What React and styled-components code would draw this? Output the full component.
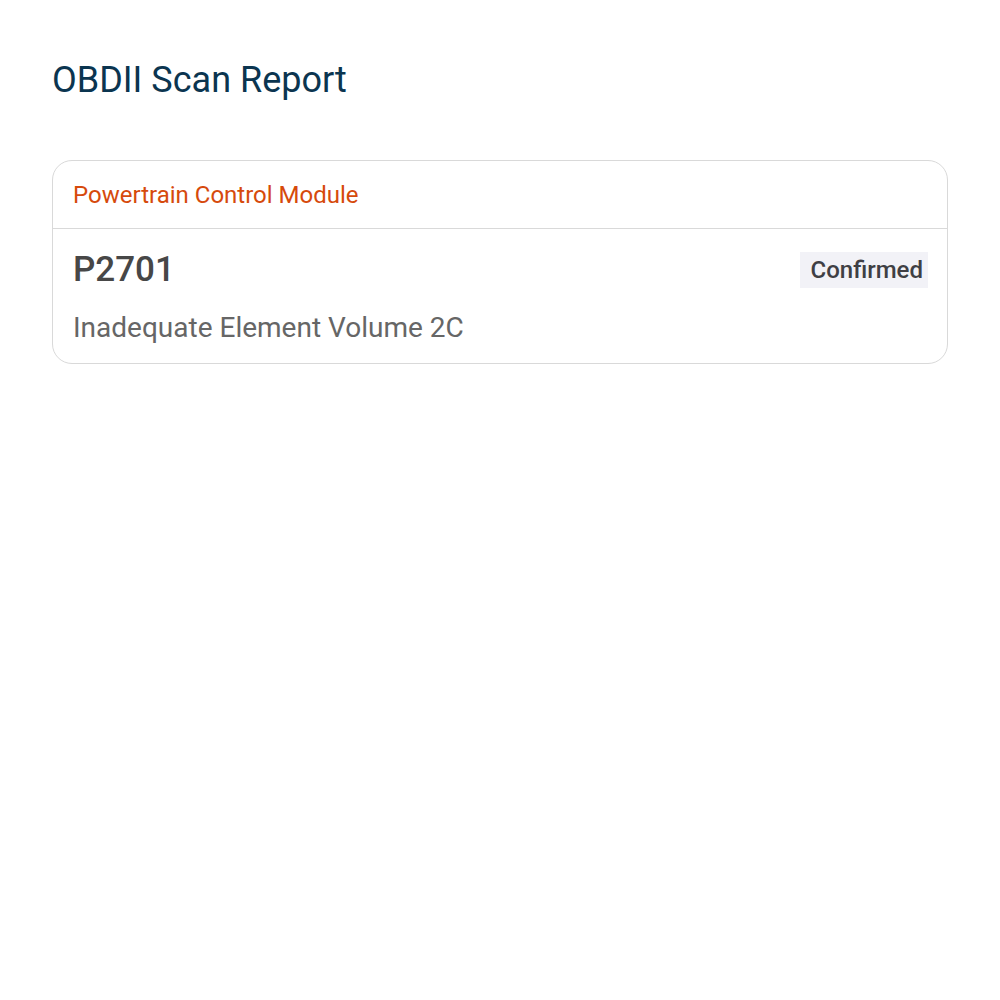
import React from "react";
import styled, { createGlobalStyle } from "styled-components";

const Global = createGlobalStyle`
  body { margin: 0; background: #ffffff; font-family: Roboto, "Liberation Sans", sans-serif; }
`;

const Page = styled.div`
  padding: 56px 52px;
  display: flex;
  flex-direction: column;
  gap: 56px;
`;

const Title = styled.h1`
  margin: 0;
  font-size: 36px;
  font-weight: 400;
  color: #0b3550;
  line-height: 48px;
`;

const Card = styled.div`
  border: 1px solid #d9d9d9;
  border-radius: 20px;
  overflow: hidden;
`;

const CardHeader = styled.div`
  padding: 0 20px;
  height: 67px;
  display: flex;
  align-items: center;
  border-bottom: 1px solid #d9d9d9;
  color: #d64a0c;
  font-size: 24px;
`;

const CardBody = styled.div`
  padding: 20px 19px 17px 20px;
  display: flex;
  flex-direction: column;
  gap: 19px;
`;

const Row = styled.div`
  display: flex;
  align-items: center;
  justify-content: space-between;
`;

const Code = styled.div`
  font-size: 35px;
  font-weight: 500;
  color: #474747;
  line-height: 42px;
`;

const Badge = styled.span`
  background: #f2f2f7;
  color: #3f3f44;
  font-size: 24px;
  font-weight: 500;
  padding: 0 5px 0 11px;
  line-height: 36px;
`;

const Description = styled.div`
  font-size: 28px;
  color: #666666;
  line-height: 36px;
`;

export default function App() {
  return (
    <>
      <Global />
      <Page>
        <Title>OBDII Scan Report</Title>
        <Card>
          <CardHeader>Powertrain Control Module</CardHeader>
          <CardBody>
            <Row>
              <Code>P2701</Code>
              <Badge>Confirmed</Badge>
            </Row>
            <Description>Inadequate Element Volume 2C</Description>
          </CardBody>
        </Card>
      </Page>
    </>
  );
}
